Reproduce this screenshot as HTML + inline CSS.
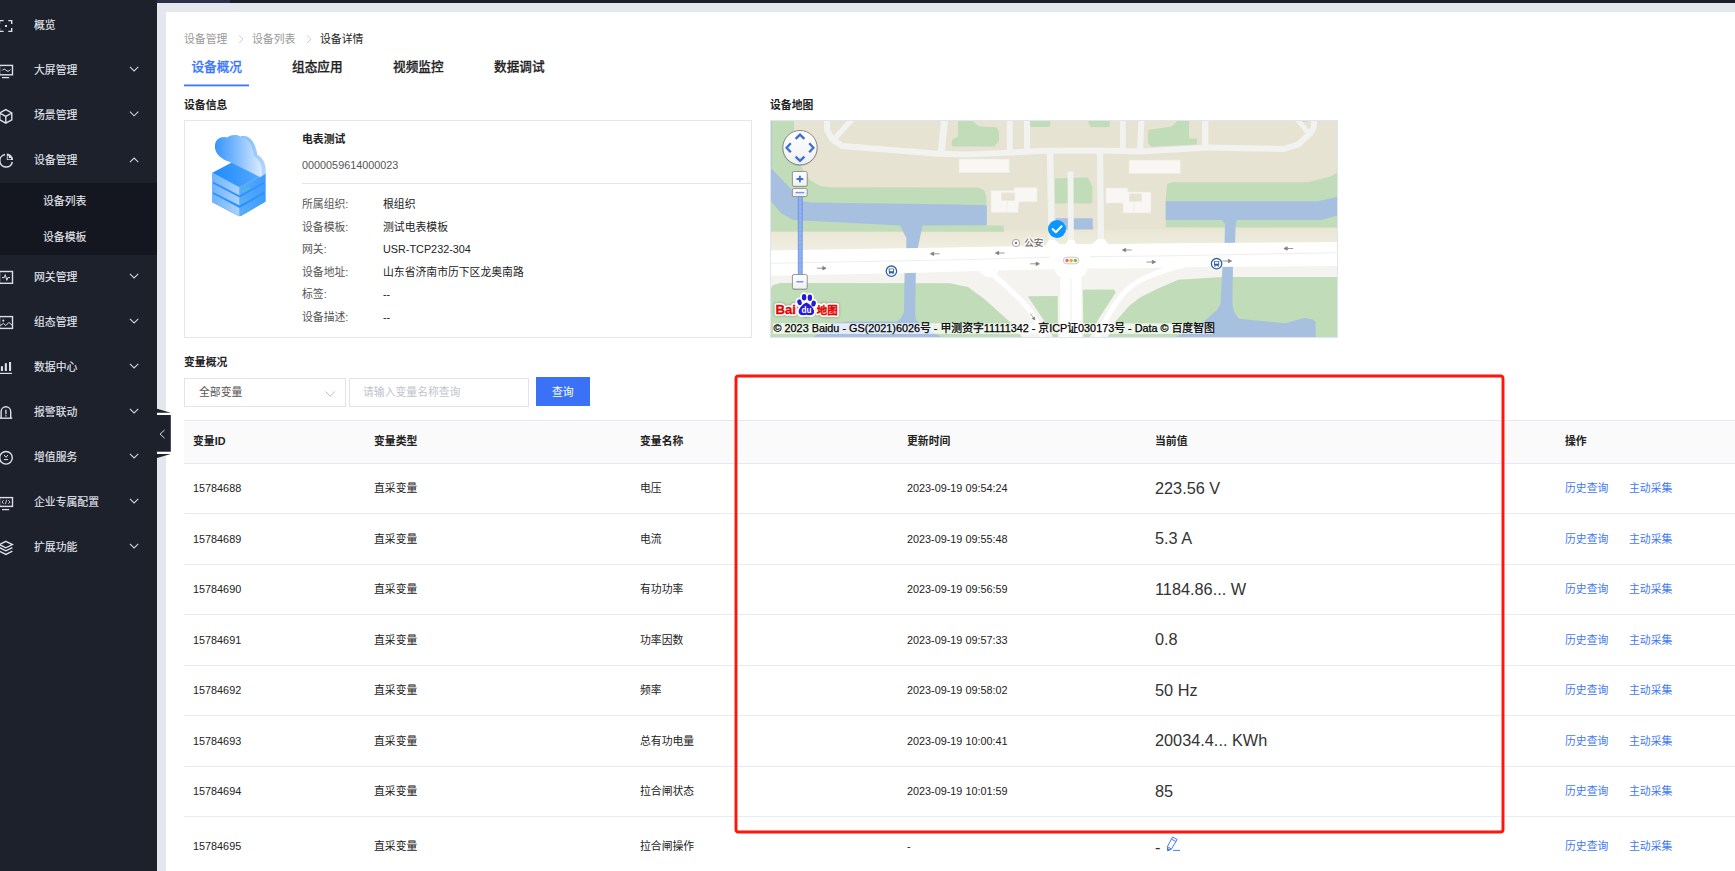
<!DOCTYPE html>
<html lang="zh-CN">
<head>
<meta charset="utf-8">
<title>设备详情</title>
<style>
*{box-sizing:border-box;margin:0;padding:0}
html,body{width:1735px;height:871px;overflow:hidden}
body{position:relative;background:#e4e7ee;font-family:"Liberation Sans","Noto Sans CJK SC",sans-serif;font-size:10.84px;color:#222;-webkit-font-smoothing:antialiased}
.a{position:absolute}
.t{position:absolute;white-space:nowrap;line-height:14px;height:14px}
#top{left:157px;top:0;width:1578px;height:3px;background:#1b1e2a}
#top i{position:absolute;left:0;top:0;width:73px;height:3px;background:#2b3047}
#side{left:0;top:0;width:157px;height:871px;background:#1d212c;color:#e6e9f0}
#sub{left:0;top:183px;width:157px;height:72px;background:#151720}
#side .t{left:34px;font-size:10.84px;-webkit-text-stroke:0.1px}
#side .s{left:43px}
#side svg{position:absolute}
#main{left:166px;top:12px;width:1569px;height:859px;background:#fff}
.b{font-weight:700}
.g{color:#999}
.lbl{color:#555}
.tabs .t{font-size:12.65px;font-weight:500;-webkit-text-stroke:0.25px;line-height:16px;height:16px;color:#222}
.blue,.tabs .blue{color:#3b76ff}
.card{left:184px;top:120px;width:568px;height:218px;border:1px solid #e3e6ee;background:#fff}
.th{left:184px;top:420px;width:1551px;height:44px;background:#fafafb;border-top:1px solid #e6e8f0;border-bottom:1px solid #e6e8f0}
.hl{left:184px;width:1551px;height:1px;background:#e9ebf2}
.v{font-size:16.3px;line-height:20px;height:20px;color:#333}
.lk{color:#3f78f6}
</style>
</head>
<body>
<div class="a" id="main"></div>
<div class="a" id="side">
  <div class="a" id="sub"></div>
  <div class="t" style="top:18px">概览</div>
  <div class="t" style="top:63px">大屏管理</div>
  <div class="t" style="top:108px">场景管理</div>
  <div class="t" style="top:153px">设备管理</div>
  <div class="t s" style="top:194px">设备列表</div>
  <div class="t s" style="top:230px">设备模板</div>
  <div class="t" style="top:270px">网关管理</div>
  <div class="t" style="top:315px">组态管理</div>
  <div class="t" style="top:360px">数据中心</div>
  <div class="t" style="top:405px">报警联动</div>
  <div class="t" style="top:450px">增值服务</div>
  <div class="t" style="top:495px">企业专属配置</div>
  <div class="t" style="top:540px">扩展功能</div>
  <svg class="a" style="left:0;top:0" width="157" height="871" viewBox="0 0 157 871" fill="none" stroke="#dcdfe9" stroke-width="1.4">
<!-- chevrons -->
<g stroke="#d3d7e1" stroke-width="1.05">
<path d="M129.900,66.900 L134.100,71 L138.300,66.900"/>
<path d="M129.900,111.700 L134.100,115.800 L138.300,111.700"/>
<path d="M129.900,162.100 L134.100,158 L138.300,162.100"/>
<path d="M129.900,273.900 L134.100,278 L138.300,273.900"/>
<path d="M129.900,318.900 L134.100,323 L138.300,318.900"/>
<path d="M129.900,363.900 L134.100,368 L138.300,363.900"/>
<path d="M129.900,408.900 L134.100,413 L138.300,408.900"/>
<path d="M129.900,453.900 L134.100,458 L138.300,453.900"/>
<path d="M129.900,498.900 L134.100,503 L138.300,498.900"/>
<path d="M129.900,543.900 L134.100,548 L138.300,543.900"/>
</g>
<!-- 1 focus -->
<path d="M-0.500,24 V20.600 H3.600 M8.300,20.600 H11.700 V24 M11.700,28 V31.400 H8.300 M3.600,31.400 H-0.500 V28"/>
<rect x="5" y="25" width="2" height="2" fill="#dcdfe9" stroke="none"/>
<!-- 2 monitor -->
<rect x="-0.500" y="65.400" width="13" height="9.400"/>
<path d="M2,77.600 H9.200" stroke-width="1.300"/>
<path d="M2,70.600 C3.500,68.600 4.800,68.800 6,70.200 S8.800,71.600 10.500,69.600" stroke-width="1"/>
<!-- 3 cube -->
<path d="M5.800,109.600 L11.800,113 V119.800 L5.800,123.200 L-0.200,119.800 V113 Z M-0.200,113 L5.800,116.400 L11.800,113 M5.800,116.400 V123.200"/>
<!-- 4 pie -->
<path d="M5,154.600 A6.300,6.300 0 1 0 12.300,162" stroke-width="1.5"/>
<path d="M6.800,153.600 A6.300,6.300 0 0 1 13,159.900 H6.800 Z" fill="#dcdfe9" stroke="none"/>
<path d="M8.200,155.800 V158.600 H11" stroke="#1d212c" stroke-width="1.100"/>
<!-- 5 gateway -->
<rect x="-0.500" y="271.500" width="13" height="11.800"/>
<path d="M2,277.600 H4.300 L5.300,274.600 L6.800,280.400 L7.800,277.600 H10" stroke-width="1"/>
<!-- 6 image -->
<rect x="-0.500" y="316.600" width="13" height="11.800"/>
<circle cx="3.300" cy="320.600" r="1.100" fill="#dcdfe9" stroke="none"/>
<path d="M-0.500,326 L3.500,323.400 L5.800,325.600 L8.800,322.400 L12.500,325.600" stroke-width="1"/>
<!-- 7 bars -->
<g fill="#dcdfe9" stroke="none">
<rect x="0.900" y="366.200" width="2.100" height="4.800"/><rect x="4.800" y="363.200" width="2.100" height="7.800"/><rect x="9" y="362" width="2.100" height="9"/>
<rect x="-1" y="372.800" width="13" height="1.200"/>
</g>
<!-- 8 alarm -->
<path d="M1.100,418 V411.600 A4.800,4.800 0 0 1 10.700,411.600 V418"/>
<path d="M-1,418.200 H12.200"/>
<path d="M5.900,409.800 V414.200 M5.900,415.200 V416.600" stroke-width="1.300"/>
<!-- 9 money -->
<circle cx="6" cy="457.800" r="6.300"/>
<path d="M4.100,455 L6,457.400 L7.900,455 M3.900,459.600 H8.100" stroke-width="1"/>
<!-- 10 code monitor -->
<rect x="-0.500" y="497.600" width="13" height="8.800"/>
<path d="M2,509.600 H9.200" stroke-width="1.300"/>
<path d="M3.600,500.200 L2,502 L3.600,503.800 M8.400,500.200 L10,502 L8.400,503.800 M6.600,499.800 L5.400,504.200" stroke-width="0.900"/>
<!-- 11 layers -->
<path d="M5.900,541.400 L12.400,544.600 L5.900,547.800 L-0.600,544.600 Z"/>
<path d="M-0.600,547.600 L5.900,550.800 L12.400,547.600 M-0.600,551.200 L5.900,554.400 L12.400,551.200"/>
</svg>

</div>
<div class="a" id="top"><i></i></div>
<svg class="a" style="left:157px;top:405px" width="16" height="58" viewBox="157 405 16 58">
<rect x="157" y="412.700" width="13.800" height="41.400" fill="#fff"/>
<polygon points="157,408.800 170.800,412.700 157,412.700" fill="#1d212c"/>
<polygon points="157,454.100 170.800,454.100 157,458" fill="#1d212c"/>
<rect x="157" y="415" width="13.800" height="36.700" fill="#1d212c"/>
<path d="M164.600,430 L160,434.100 L164.600,438.200" fill="none" stroke="#cfd6e6" stroke-width="1"/>
</svg>


<!-- breadcrumb -->
<div class="t g" style="left:184px;top:32px">设备管理</div>
<div class="t g" style="left:252px;top:32px">设备列表</div>
<div class="t" style="left:320px;top:32px">设备详情</div>
<svg class="a" style="left:230px;top:30px" width="90" height="18" viewBox="230 30 90 18" fill="none" stroke="#c0c4cc" stroke-width="0.9">
<path d="M239.200,35.400 L243,39.200 L239.200,43"/><path d="M307,35.400 L310.800,39.200 L307,43"/>
</svg>


<!-- tabs -->
<div class="tabs">
  <div class="t blue" style="left:191.400px;top:59px">设备概况</div>
  <div class="t" style="left:292px;top:59px">组态应用</div>
  <div class="t" style="left:393px;top:59px">视频监控</div>
  <div class="t" style="left:494px;top:59px">数据调试</div>
</div>
<svg class="a" style="left:180px;top:80px" width="80" height="10" viewBox="180 80 80 10"><rect x="184" y="84.500" width="65" height="1.800" fill="#3b76ff"/></svg>

<div class="t b" style="left:184px;top:98px">设备信息</div>
<div class="t b" style="left:770px;top:98px">设备地图</div>

<div class="a card"></div>
<svg class="a" style="left:200px;top:125px" width="80" height="100" viewBox="0 0 697 871">
<defs>
<linearGradient id="dg1" x1="0" y1="0" x2="1" y2="0"><stop offset="0" stop-color="#1b8bfd"/><stop offset="1" stop-color="#5cabfe"/></linearGradient>
<linearGradient id="dg2" x1="0" y1="0" x2="1" y2="0"><stop offset="0" stop-color="#6db3fd"/><stop offset="1" stop-color="#acd3fe"/></linearGradient>
<linearGradient id="dg3" x1="0" y1="0" x2="1" y2="0"><stop offset="0" stop-color="#5aaafe"/><stop offset="1" stop-color="#3f9cfd"/></linearGradient>
<linearGradient id="dg4" x1="0" y1="0" x2="1" y2="0"><stop offset="0" stop-color="#3595fd"/><stop offset="0.45" stop-color="#7dbafd"/><stop offset="1" stop-color="#dcecff"/></linearGradient>
<linearGradient id="dg5" x1="0" y1="0" x2="1" y2="1"><stop offset="0" stop-color="#6fb3fd"/><stop offset="1" stop-color="#b9d8fe"/></linearGradient>
</defs>
<!-- bottom layers darker separators -->
<polygon points="108,420 345,548 570,425 570,668 360,790 330,790 108,672" fill="#2a90fd"/>
<!-- layer 3 -->
<polygon points="108,597 345,722 345,797 108,672" fill="url(#dg2)"/>
<polygon points="345,722 570,592 570,667 345,797" fill="url(#dg3)"/>
<!-- layer 2 -->
<polygon points="108,507 345,632 345,702 108,582" fill="url(#dg2)"/>
<polygon points="345,632 570,502 570,577 345,702" fill="url(#dg3)"/>
<!-- layer 1 -->
<polygon points="108,415 345,545 345,615 108,490" fill="url(#dg2)"/>
<polygon points="345,545 570,420 570,490 345,615" fill="url(#dg3)"/>
<!-- top face -->
<polygon points="108,415 330,298 570,420 345,545" fill="url(#dg1)"/>
<!-- leds -->
<g fill="#3fd0a0"><circle cx="375" cy="573" r="9"/><circle cx="398" cy="561" r="9"/><circle cx="422" cy="549" r="9"/><circle cx="375" cy="665" r="9"/><circle cx="398" cy="653" r="9"/><circle cx="375" cy="755" r="9"/><circle cx="422" cy="732" r="9"/></g>
<!-- cloud back rim -->
<path d="M270,322 C190,290 140,230 152,165 C160,115 215,92 255,112 C275,82 325,78 352,100 C425,78 480,140 500,258 C552,285 582,350 570,425 L525,455 Z" fill="url(#dg5)"/>
<!-- cloud front -->
<path d="M250,318 C170,290 118,232 132,165 C142,110 198,93 235,115 C255,85 300,80 330,108 C400,88 452,150 472,272 C520,298 548,360 538,440 L520,450 Z" fill="url(#dg4)"/>
</svg>

<div class="t b" style="left:302px;top:132px">电表测试</div>
<div class="t lbl" style="left:302px;top:158px">0000059614000023</div>
<div class="a" style="left:302px;top:183px;width:449px;height:1px;background:#e3e6ee"></div>
<div class="t lbl" style="left:302px;top:197px">所属组织:</div><div class="t" style="left:383px;top:197px">根组织</div>
<div class="t lbl" style="left:302px;top:220px">设备模板:</div><div class="t" style="left:383px;top:220px">测试电表模板</div>
<div class="t lbl" style="left:302px;top:242px">网关:</div><div class="t" style="left:383px;top:242px">USR-TCP232-304</div>
<div class="t lbl" style="left:302px;top:265px">设备地址:</div><div class="t" style="left:383px;top:265px">山东省济南市历下区龙奥南路</div>
<div class="t lbl" style="left:302px;top:287px">标签:</div><div class="t" style="left:383px;top:287px">--</div>
<div class="t lbl" style="left:302px;top:310px">设备描述:</div><div class="t" style="left:383px;top:310px">--</div>

<div class="a" style="left:770px;top:120px;width:568px;height:218px;background:#dfe4f3;overflow:hidden">
<svg class="a" style="left:1px;top:1px" width="566" height="216" viewBox="1 1 566 216" font-family="Liberation Sans, Noto Sans CJK SC, sans-serif">
<defs>
<linearGradient id="nb" x1="0" y1="0" x2="0" y2="1"><stop offset="0" stop-color="#e9e6d5"/><stop offset="1" stop-color="#f1efe2"/></linearGradient>
<linearGradient id="pc" x1="0" y1="0" x2="0" y2="1"><stop offset="0" stop-color="#ffffff"/><stop offset="1" stop-color="#f0f0f0"/></linearGradient>
<filter id="blur1" x="-20%" y="-20%" width="140%" height="140%"><feGaussianBlur stdDeviation="0.9"/></filter>
</defs>
<rect x="0" y="0" width="568" height="218" fill="#e7e3d2"/>
<!-- pale band north of main road -->
<polygon points="0,112 567,108 567,124 0,132" fill="url(#nb)"/>
<!-- greens north -->
<g fill="#c1dcb8">
<polygon points="0,0 24,0 24,25 28,42 40,60 50,66 60,67.3 188,67.5 208,67.6 214,70 216.4,76 216.4,105.5 233.5,105.6 234,111.8 0,111.5"/>
<polygon points="188,0 201.2,0 209,6.6 226.3,7.2 229,11.2 229,20.4 224.3,26.4 183,26.4 181.5,24.4 182.2,19.8 188,16.5"/>
<polygon points="260,0 280.4,0 280.2,6 279,7 261,7 260,6"/>
<polygon points="318.7,0 339.8,0 339.6,6 338,7.2 321,7 318.7,4"/>
<polygon points="378,10 401.7,6.6 408.3,0 419,0 419,18.5 427,18.5 427,24.4 381.2,26.8 378,23"/>
<polygon points="532,0 540,0 538,1.6 533,2"/>
<polygon points="284.8,58.6 318,57.4 322.4,66 322.4,82 321,83.5 284.8,83.5"/>
<polygon points="397,64 402.3,62.3 537,62.3 560,56.7 567,52.8 567,107.6 395.7,107.3 395.7,81"/>
</g>
<!-- water north -->
<g fill="#a7c0e0">
<polygon points="0,0 1.6,0 1.6,47 0,47"/>
<polygon points="0,47 22,70 31,80.5 40,82.6 188,84.6 216.8,85.2 216.8,105.3 152.5,105.6 147.8,128 147.8,133 136.3,133 136.3,118 130,105.6 23,100 11,93 0,80"/>
<polygon points="285.7,98.3 322.6,98.3 323,109.5 285.7,109.5"/>
<polygon points="395.7,81.2 548.2,81.2 567,76.8 567,95.7 550.9,100 467,100 465.7,104 465,126 454.5,126 455,104 451.8,100 395.7,100"/>
</g>
<!-- south pale base -->
<polygon points="0,150 567,142 567,217 0,217" fill="#f4f3ef"/>
<!-- greens south -->
<g fill="#c1dcb8">
<polygon points="0,170 3,165 10,163 180,163.3 198,167 214.4,179 240.8,202.7 252,217 0,217"/>
<polygon points="257.7,176.3 287.7,176 288,217 283,217 275,202"/>
<polygon points="312.8,169.7 343.8,169.4 345.8,172.3 326.6,202 320,217 313.4,217"/>
<polygon points="338,217 345,202 359.6,185.5 370,177.5 388,168.4 408.3,159.8 451.8,157 567,157 567,217"/>
</g>
<!-- water south -->
<g fill="#a7c0e0">
<polygon points="134.6,150 145.9,150 145.2,194 146,200 152,205 171,217 43.5,217 62,203 80,201.5 127,201.5 131,198 134,192"/>
<polygon points="452.5,145 463,145 462.4,184 464,192 469,198.7 515.2,203.3 533.7,198 543,199.5 545.6,202 545.6,217 405.6,217 433.4,202 447,190 450.5,184"/>
</g>
<!-- minor roads -->
<g fill="none" stroke="#f2f2f0" stroke-linejoin="round" stroke-linecap="butt">
<path d="M57,-2 L57,10 L62,19 L72,26 L168,33.8 L198,34.4 L232,33 L274,30.8 L330,30.6 L370,31.4 L438.6,27.4 L514,29 L528.4,24.4 L540.5,13 L543.8,7 L544.2,-2" stroke-width="6"/>
<path d="M82.5,-1 L64,19" stroke-width="5.5"/>
<path d="M174.6,-1 L171.3,32" stroke-width="7"/>
<path d="M239.8,-1 L239.8,31" stroke-width="6"/>
<path d="M257,-1 L257,31" stroke-width="6"/>
<path d="M352.8,-1 L352.8,30" stroke-width="5.8"/>
<path d="M371.5,-1 L370,30" stroke-width="6"/>
<path d="M435.2,-1 L435.2,27" stroke-width="6.3"/>
<path d="M527,-1 L538,12.5" stroke-width="5"/>
<path d="M280,31 L281.7,113 L282,130" stroke-width="6.6"/>
<path d="M330,31 L331,130" stroke-width="6.3"/>
<path d="M300.5,51.5 L301,130" stroke-width="5.9"/>
</g>
<!-- buildings -->
<g fill="#f8f7f4" stroke="#ebe9e2" stroke-width="0.6">
<rect x="189" y="39" width="50.2" height="13.8"/>
<rect x="359" y="40" width="51.3" height="13.7"/>
<polygon points="221,70.6 244,70.6 244,67.6 267.2,67.6 267.2,81.8 249,81.8 248,92.4 221,92.4"/>
<polygon points="335.9,68 358,68 358,72 381,72 381,93 353,93 353,83.1 335.9,83.1"/>
<rect x="231.3" y="72.9" width="13.5" height="7.6" fill="#e7e3d2"/>
<rect x="359.4" y="73.9" width="12.4" height="7.5" fill="#e7e3d2"/>
<path d="M237,80.5 L237,92.4 M364.2,81.4 L364.2,93" fill="none"/>
</g>
<!-- main road -->
<g fill="#ffffff">
<polygon points="0,130.5 190,127.3 275,125.8 340,124.3 380,123.6 567,122 567,146 410,147.2 388,148 320,148.5 280,149.3 198,151.3 130,153.3 0,155.8"/>
<polygon points="274,128 279,120 285,120 290,124 296,124 298,120 304,120 306,124 322,124 328,119 334,119 340,126"/>
<rect x="290.3" y="146" width="21.1" height="72"/>
<polygon points="208,151.6 229,150.6 224,157 217,157"/>
<path d="M214,147 Q238,167 252.2,181.6 T273,218" fill="none" stroke="#fff" stroke-width="5"/>
<polygon points="284,149 318,148.5 314,156 288,156"/>
<path d="M414,145.5 C385,152 365,160 352.5,174.5 C343,186 334,202 327,218" fill="none" stroke="#fff" stroke-width="5.2"/>
</g>
<g fill="none" stroke="#e6e6e4" stroke-width="0.7">
<path d="M0,143.3 L198,139.6 L279,137.2 M320,136.7 L388,136 L567,132.7 M301,158.5 L301,217"/>
</g>
<!-- arrows -->
<g fill="#808080" stroke="#808080" stroke-width="0.8" stroke-linejoin="round">
<path d="M-1.5,0 H4.6 M-4.6,0 L-1.3,-1.7 L-1.3,1.7 Z" transform="translate(165,133.8)"/>
<path d="M-1.5,0 H4.6 M-4.6,0 L-1.3,-1.7 L-1.3,1.7 Z" transform="translate(230,133)"/>
<path d="M-1.5,0 H4.6 M-4.6,0 L-1.3,-1.7 L-1.3,1.7 Z" transform="translate(357,130)"/>
<path d="M-1.5,0 H4.6 M-4.6,0 L-1.3,-1.7 L-1.3,1.7 Z" transform="translate(518.5,128.5)"/>
<path d="M-4.6,0 H1.5 M4.6,0 L1.3,-1.7 L1.3,1.7 Z" transform="translate(51.5,148.2)"/>
<path d="M-4.6,0 H1.5 M4.6,0 L1.3,-1.7 L1.3,1.7 Z" transform="translate(264.8,143.8)"/>
<path d="M-4.6,0 H1.5 M4.6,0 L1.3,-1.7 L1.3,1.7 Z" transform="translate(381,142)"/>
<path d="M-4.6,0 H1.5 M4.6,0 L1.3,-1.7 L1.3,1.7 Z" transform="translate(457,141)"/>
<path d="M-4,0 H1.3 M4,0 L1.2,-1.4 L1.2,1.4 Z" transform="translate(262.6,196.7) rotate(55)" stroke-width="0.6"/>
</g>
<!-- traffic light -->
<rect x="293.3" y="137.2" width="15.6" height="6.6" rx="3.3" fill="#fbfbfb" stroke="#b5b5b5" stroke-width="0.7"/>
<circle cx="297" cy="140.5" r="1.7" fill="#ee6a6a"/><circle cx="301.2" cy="140.5" r="1.7" fill="#f5a623"/><circle cx="305.4" cy="140.5" r="1.7" fill="#7cb860"/>
<!-- bus stops -->
<g id="bus1" transform="translate(121.4,151.2)">
<circle r="5.2" fill="#fff" stroke="#2f5ea6" stroke-width="1.3"/>
<rect x="-2.6" y="-2.8" width="5.2" height="4.8" rx="0.9" fill="#2f5ea6"/><rect x="-1.7" y="-2" width="3.4" height="2" fill="#fff"/>
<rect x="-2.3" y="2" width="1.2" height="1" fill="#2f5ea6"/><rect x="1.1" y="2" width="1.2" height="1" fill="#2f5ea6"/>
</g>
<g transform="translate(446.6,143.7)">
<circle r="5.2" fill="#fff" stroke="#2f5ea6" stroke-width="1.3"/>
<rect x="-2.6" y="-2.8" width="5.2" height="4.8" rx="0.9" fill="#2f5ea6"/><rect x="-1.7" y="-2" width="3.4" height="2" fill="#fff"/>
<rect x="-2.3" y="2" width="1.2" height="1" fill="#2f5ea6"/><rect x="1.1" y="2" width="1.2" height="1" fill="#2f5ea6"/>
</g>
<!-- poi -->
<circle cx="246" cy="123" r="3.6" fill="#fff" stroke="#8a7f7f" stroke-width="0.7"/><circle cx="246" cy="123" r="1.2" fill="#8a6f6f"/>
<text x="254.2" y="126" font-size="9.6" fill="#fff" stroke="#fff" stroke-width="2" stroke-linejoin="round">公安</text><text x="254.2" y="126" font-size="9.6" fill="#666" stroke="#666" stroke-width="0.2">公安</text>
<!-- marker -->
<circle cx="287" cy="109" r="9" fill="#0b95ff"/>
<path d="M282.6,109 L285.8,112.2 L291.6,106.2" fill="none" stroke="#fff" stroke-width="2" stroke-linecap="round" stroke-linejoin="round"/>
<!-- pan control -->
<circle cx="30" cy="28.4" r="17.6" fill="#000" opacity="0.12"/>
<circle cx="30" cy="27.7" r="17.2" fill="url(#pc)" stroke="#7c7c7c" stroke-width="0.9"/>
<g fill="none" stroke="#3a6fd8" stroke-width="2.3" stroke-linejoin="miter">
<path d="M25.6,18.8 L30,14.6 L34.4,18.8"/>
<path d="M25.6,36.6 L30,40.8 L34.4,36.6"/>
<path d="M20.8,23.2 L16.6,27.7 L20.8,32.2"/>
<path d="M39.2,23.2 L43.4,27.7 L39.2,32.2"/>
</g>
<!-- zoom control -->
<rect x="28.2" y="72" width="4" height="86" fill="#8fb3f3" stroke="#5d86d6" stroke-width="0.7"/>
<path d="M28,80h4.4M28,84.5h4.4M28,89h4.4M28,93.5h4.4M28,98h4.4M28,102.500h4.400M28,107h4.400M28,111.500h4.400M28,116h4.400M28,120.500h4.400M28,125h4.400M28,129.500h4.400M28,134h4.400M28,138.500h4.400M28,143h4.400M28,147.500h4.400M28,152h4.400" stroke="#7aa2ec" stroke-width="0.6"/>
<rect x="22.6" y="52.2" width="14.8" height="14.8" rx="1.6" fill="#000" opacity="0.15"/>
<rect x="22.4" y="51.5" width="14.8" height="14.8" rx="1.6" fill="url(#pc)" stroke="#808080" stroke-width="0.8"/>
<path d="M26.6,59 H33.2 M29.9,55.7 V62.3" stroke="#3a6fd8" stroke-width="1.8" fill="none"/>
<rect x="22.4" y="68.6" width="14.8" height="8" rx="1.4" fill="url(#pc)" stroke="#808080" stroke-width="0.8"/>
<path d="M25.4,72.6 H34.4" stroke="#6f97ea" stroke-width="1.4" fill="none"/>
<rect x="22.6" y="155.2" width="14.8" height="14.6" rx="1.6" fill="#000" opacity="0.15"/>
<rect x="22.4" y="154.5" width="14.8" height="14.6" rx="1.6" fill="url(#pc)" stroke="#808080" stroke-width="0.8"/>
<path d="M26.4,161.800 H33.400" stroke="#4f80e6" stroke-width="1.2" fill="none"/>
<!-- baidu logo -->
<g id="bdlogo">
<g opacity="0.35" filter="url(#blur1)" stroke="#333" stroke-width="4.6" stroke-linejoin="round" fill="#333">
<text x="5.6" y="193.8" font-size="13.5" font-weight="bold" textLength="20.4" lengthAdjust="spacingAndGlyphs">Bai</text>
<text x="46.8" y="193.7" font-size="10.6" font-weight="bold" textLength="21" lengthAdjust="spacingAndGlyphs">地图</text>
<ellipse cx="36.5" cy="187" rx="8" ry="8.5"/>
</g>
<g stroke="#fff" stroke-width="3.6" stroke-linejoin="round" fill="#fff">
<text x="5.6" y="193.8" font-size="13.5" font-weight="bold" textLength="20.4" lengthAdjust="spacingAndGlyphs">Bai</text>
<text x="46.8" y="193.7" font-size="10.6" font-weight="bold" textLength="21" lengthAdjust="spacingAndGlyphs">地图</text>
<path d="M36.4,182.6 C33,184 28.4,188.6 28.7,192 C29,195.4 32.6,195.6 36.4,194.8 C40.2,195.600 43.800,195.400 44.100,192 C44.400,188.600 39.800,184 36.400,182.600 Z"/>
<ellipse cx="29.500" cy="182.300" rx="2.200" ry="3"/><ellipse cx="34.100" cy="177.300" rx="2.200" ry="3.200"/><ellipse cx="39.900" cy="177.700" rx="2.200" ry="3.200"/><ellipse cx="43.600" cy="183.600" rx="2.200" ry="3"/>
</g>
<g fill="#e10602" stroke="#e10602" stroke-width="0.35">
<text x="5.600" y="193.800" font-size="13.500" font-weight="bold" textLength="20.400" lengthAdjust="spacingAndGlyphs">Bai</text>
<text x="46.800" y="193.700" font-size="10.600" font-weight="bold" textLength="21" lengthAdjust="spacingAndGlyphs">地图</text>
</g>
<g fill="#2319dc">
<path d="M36.400,182.600 C33,184 28.400,188.600 28.700,192 C29,195.400 32.600,195.600 36.400,194.800 C40.200,195.600 43.800,195.400 44.100,192 C44.400,188.600 39.800,184 36.400,182.600 Z"/>
<ellipse cx="29.500" cy="182.300" rx="2.200" ry="3" transform="rotate(-15 29.500 182.300)"/><ellipse cx="34.100" cy="177.300" rx="2.200" ry="3.200"/><ellipse cx="39.900" cy="177.700" rx="2.200" ry="3.200"/><ellipse cx="43.600" cy="183.600" rx="2.200" ry="3" transform="rotate(15 43.600 183.600)"/>
</g>
<text x="31.600" y="193.100" font-size="9" font-weight="bold" fill="#fff" textLength="10" lengthAdjust="spacingAndGlyphs">du</text>
</g>
<!-- copyright -->
<rect x="3" y="203.300" width="440.500" height="10.600" fill="#fff" opacity="0.7"/>
<text x="3.600" y="212.300" font-size="10.840" fill="#000" stroke="#000" stroke-width="0.25">© 2023 Baidu - GS(2021)6026号 - 甲测资字11111342 - 京ICP证030173号 - Data © 百度智图</text>

</svg>
</div>


<div class="t b" style="left:184px;top:355px">变量概况</div>
<div class="a" style="left:184px;top:378px;width:162px;height:29px;border:1px solid #e0e3ec;background:#fff"></div>
<div class="t lbl" style="left:199px;top:385px">全部变量</div>
<div class="a" style="left:349px;top:378px;width:180px;height:29px;border:1px solid #e0e3ec;background:#fff"></div>
<div class="t" style="left:363px;top:385px;color:#c0c4cc">请输入变量名称查询</div>
<div class="a" style="left:536px;top:377px;width:54px;height:29px;background:#3a71f7"></div>
<div class="t" style="left:552px;top:385px;color:#fff">查询</div>

<!-- table -->
<div class="a th"></div>
<div class="t b" style="left:193px;top:434px">变量<b>ID</b></div>
<div class="t b" style="left:374px;top:434px">变量类型</div>
<div class="t b" style="left:640px;top:434px">变量名称</div>
<div class="t b" style="left:907px;top:434px">更新时间</div>
<div class="t b" style="left:1155px;top:434px">当前值</div>
<div class="t b" style="left:1565px;top:434px">操作</div>
<div class="t" style="left:193px;top:481px">15784688</div>
<div class="t" style="left:374px;top:481px">直采变量</div>
<div class="t" style="left:640px;top:481px">电压</div>
<div class="t" style="left:907px;top:481px">2023-09-19 09:54:24</div>
<div class="t v" style="left:1155px;top:478px">223.56 V</div>
<div class="t lk" style="left:1565px;top:481px">历史查询</div>
<div class="t lk" style="left:1629px;top:481px">主动采集</div>
<div class="t" style="left:193px;top:531.5px">15784689</div>
<div class="t" style="left:374px;top:531.5px">直采变量</div>
<div class="t" style="left:640px;top:531.5px">电流</div>
<div class="t" style="left:907px;top:531.5px">2023-09-19 09:55:48</div>
<div class="t v" style="left:1155px;top:528px">5.3 A</div>
<div class="t lk" style="left:1565px;top:531.5px">历史查询</div>
<div class="t lk" style="left:1629px;top:531.5px">主动采集</div>
<div class="t" style="left:193px;top:582px">15784690</div>
<div class="t" style="left:374px;top:582px">直采变量</div>
<div class="t" style="left:640px;top:582px">有功功率</div>
<div class="t" style="left:907px;top:582px">2023-09-19 09:56:59</div>
<div class="t v" style="left:1155px;top:579px">1184.86... W</div>
<div class="t lk" style="left:1565px;top:582px">历史查询</div>
<div class="t lk" style="left:1629px;top:582px">主动采集</div>
<div class="t" style="left:193px;top:632.5px">15784691</div>
<div class="t" style="left:374px;top:632.5px">直采变量</div>
<div class="t" style="left:640px;top:632.5px">功率因数</div>
<div class="t" style="left:907px;top:632.5px">2023-09-19 09:57:33</div>
<div class="t v" style="left:1155px;top:629px">0.8</div>
<div class="t lk" style="left:1565px;top:632.5px">历史查询</div>
<div class="t lk" style="left:1629px;top:632.5px">主动采集</div>
<div class="t" style="left:193px;top:683px">15784692</div>
<div class="t" style="left:374px;top:683px">直采变量</div>
<div class="t" style="left:640px;top:683px">频率</div>
<div class="t" style="left:907px;top:683px">2023-09-19 09:58:02</div>
<div class="t v" style="left:1155px;top:680px">50 Hz</div>
<div class="t lk" style="left:1565px;top:683px">历史查询</div>
<div class="t lk" style="left:1629px;top:683px">主动采集</div>
<div class="t" style="left:193px;top:733.5px">15784693</div>
<div class="t" style="left:374px;top:733.5px">直采变量</div>
<div class="t" style="left:640px;top:733.5px">总有功电量</div>
<div class="t" style="left:907px;top:733.5px">2023-09-19 10:00:41</div>
<div class="t v" style="left:1155px;top:730px">20034.4... KWh</div>
<div class="t lk" style="left:1565px;top:733.5px">历史查询</div>
<div class="t lk" style="left:1629px;top:733.5px">主动采集</div>
<div class="t" style="left:193px;top:784px">15784694</div>
<div class="t" style="left:374px;top:784px">直采变量</div>
<div class="t" style="left:640px;top:784px">拉合闸状态</div>
<div class="t" style="left:907px;top:784px">2023-09-19 10:01:59</div>
<div class="t v" style="left:1155px;top:781px">85</div>
<div class="t lk" style="left:1565px;top:784px">历史查询</div>
<div class="t lk" style="left:1629px;top:784px">主动采集</div>
<div class="t" style="left:193px;top:839px">15784695</div>
<div class="t" style="left:374px;top:839px">直采变量</div>
<div class="t" style="left:640px;top:839px">拉合闸操作</div>
<div class="t" style="left:907px;top:839px">-</div>
<div class="t v" style="left:1155px;top:837px">-</div>
<div class="t lk" style="left:1565px;top:839px">历史查询</div>
<div class="t lk" style="left:1629px;top:839px">主动采集</div>
<div class="a hl" style="top:513.0px"></div>
<div class="a hl" style="top:563.5px"></div>
<div class="a hl" style="top:614.0px"></div>
<div class="a hl" style="top:664.5px"></div>
<div class="a hl" style="top:715.0px"></div>
<div class="a hl" style="top:765.5px"></div>
<div class="a hl" style="top:816.0px"></div>


<svg class="a" style="left:320px;top:385px" width="20" height="16" viewBox="320 385 20 16" fill="none" stroke="#b4b8c0" stroke-width="0.9">
<path d="M325.500,391.500 L330.200,396.200 L334.900,391.500"/>
</svg>
<svg class="a" style="left:1164px;top:834px" width="20" height="20" viewBox="1164 834 20 20" fill="none" stroke="#3b76ff" stroke-width="0.95" stroke-linejoin="round">
<path d="M1172.600,837 L1177.200,839.500 L1171.400,849.100 L1167.700,850.600 L1167.400,846.600 Z"/>
<path d="M1171.600,839.200 L1175.900,841.500 M1167.400,846.600 L1171.400,849.100 M1173,850.400 H1180"/>
<path d="M1167.700,850.600 L1167.500,848.600 L1169.600,849.800 Z" fill="#3b76ff"/>
</svg>

<!-- red highlight -->
<svg class="a" style="left:730px;top:370px" width="780" height="470" viewBox="730 370 780 470"><rect x="736" y="376" width="767" height="456" rx="2.6" fill="none" stroke="#ff1509" stroke-width="2.9"/></svg>
</body>
</html>
